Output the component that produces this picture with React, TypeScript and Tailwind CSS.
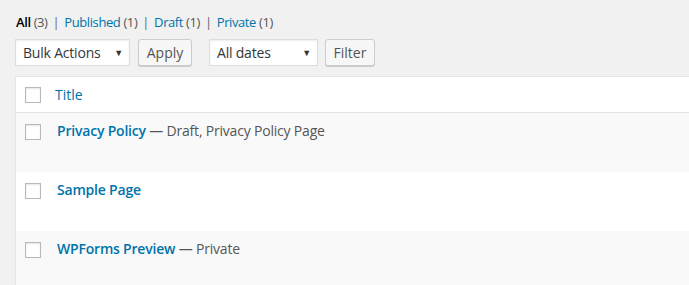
import React from 'react'

const statuses = [
  { label: 'Published', count: 1 },
  { label: 'Draft', count: 1 },
  { label: 'Private', count: 1 },
]

const pages = [
  { title: 'Privacy Policy', state: 'Draft, Privacy Policy Page' },
  { title: 'Sample Page' },
  { title: 'WPForms Preview', state: 'Private' },
]

function Checkbox() {
  return (
    <span className="block size-4 shrink-0 border border-[#b4b9be] bg-white shadow-[inset_0_1px_2px_rgba(0,0,0,0.1)]" />
  )
}

function Select({ label, width }: { label: string; width: string }) {
  return (
    <div
      className={`${width} flex h-[27px] items-center justify-between border border-[#ddd] bg-white pl-[7px] pr-[6px] text-[14px] tracking-[-0.2px] text-[#32373c] shadow-[inset_0_1px_2px_rgba(0,0,0,0.07)]`}
    >
      <span>{label}</span>
      <span className="text-[9px] text-[#333]">▼</span>
    </div>
  )
}

function Button({ label, width }: { label: string; width: string }) {
  return (
    <div
      className={`${width} flex h-[27px] items-center justify-center rounded-[3px] border border-[#ccc] bg-[#f7f7f7] text-[14px] text-[#555] shadow-[0_1px_0_#ccc]`}
    >
      {label}
    </div>
  )
}

export default function App() {
  return (
    <div
      className="h-[285px] w-[689px] overflow-hidden bg-[#f1f1f1] pl-[15px]"
      style={{ fontFamily: '"Open Sans", "Noto Sans", sans-serif' }}
    >
      {/* status links */}
      <ul className="flex pt-[12px] text-[13px] leading-[20px] tracking-[-0.4px] text-[#555]">
        <li className="pl-px">
          <span className="font-semibold text-black">All</span> (3)
        </li>
        {statuses.map((s) => (
          <li key={s.label}>
            <span className="px-[5px] text-[#666]">|</span>
            <span className="text-[#0073aa]">{s.label}</span> ({s.count})
          </li>
        ))}
      </ul>

      {/* bulk actions + filters */}
      <div className="mt-[7px] flex items-center">
        <Select label="Bulk Actions" width="w-[115px]" />
        <div className="ml-[8px]">
          <Button label="Apply" width="w-[54px]" />
        </div>
        <div className="ml-[17px]">
          <Select label="All dates" width="w-[109px]" />
        </div>
        <div className="ml-[7px]">
          <Button label="Filter" width="w-[50px]" />
        </div>
      </div>

      {/* list table */}
      <div className="mt-[10px] w-[700px] border border-[#e5e5e5] bg-white shadow-[0_1px_1px_rgba(0,0,0,0.04)]">
        <div className="flex h-[36px] items-center border-b border-[#e1e1e1] pl-[9px]">
          <Checkbox />
          <span className="ml-[14px] text-[14px] text-[#0073aa]">Title</span>
        </div>
        {pages.map((p, i) => (
          <div
            key={p.title}
            className={`flex h-[59px] items-start pl-[9px] ${i % 2 === 0 ? 'bg-[#f9f9f9]' : 'bg-white'}`}
          >
            <div className="mt-[11px]">
              <Checkbox />
            </div>
            <div className="ml-[16px] mt-[8px] text-[14px] leading-[20px] tracking-[-0.2px] text-[#555]">
              <span className="font-semibold text-[#0073aa]">{p.title}</span>
              {p.state && <span> — {p.state}</span>}
            </div>
          </div>
        ))}
      </div>
    </div>
  )
}
